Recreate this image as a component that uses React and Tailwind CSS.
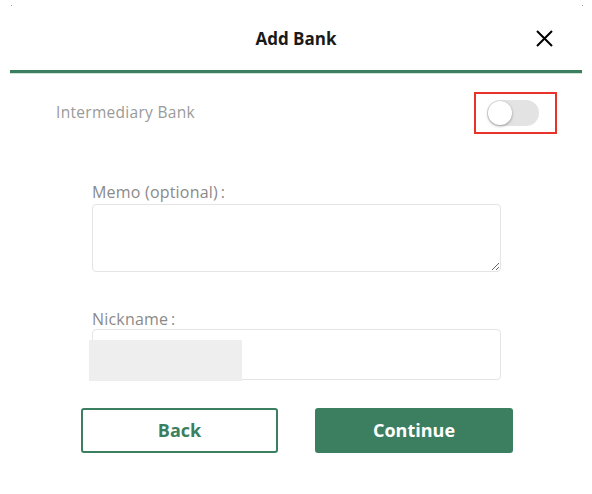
import React, { useState } from 'react';

export default function App() {
  const [intermediary, setIntermediary] = useState(false);
  const [memo, setMemo] = useState('');
  const [nickname, setNickname] = useState('');

  return (
    <div className="relative w-[592px] h-[494px] bg-white overflow-hidden font-['Open_Sans',sans-serif]">
      {/* corner marks */}
      <div className="absolute left-[11px] top-[5px] w-[1px] h-[1px] bg-gray-400" />
      <div className="absolute left-[582px] top-[5px] w-[1px] h-[1px] bg-gray-400" />

      {/* Header */}
      <div className="relative flex items-center justify-center h-[70px] pt-[8px]">
        <h1 className="text-[17px] font-bold text-[#1a1a1a]">Add Bank</h1>
        <button className="absolute right-[38px] top-[29px] text-black">
          <svg width="19" height="19" viewBox="0 0 19 19" fill="none" stroke="currentColor" strokeWidth="2">
            <path d="M2 2L17 17M17 2L2 17" />
          </svg>
        </button>
      </div>
      <div className="ml-[10px] mr-[10px] h-[4px] bg-[#3b7f60] border-b border-[#cfe3d9]" />

      {/* Intermediary toggle */}
      <div className="flex items-center justify-between pl-[56px] pr-[35px] mt-[18px]">
        <span className="text-[15.5px] text-[#9a9a9a] tracking-[0.3px]">Intermediary Bank</span>
        <div className="w-[83px] h-[42px] border-2 border-[#e8322a] flex items-center pl-[11px]">
          <button
            onClick={() => setIntermediary(!intermediary)}
            className={`relative w-[52px] h-[26px] rounded-full ${intermediary ? 'bg-[#3b7f60]' : 'bg-[#e3e3e3]'}`}
          >
            <span
              className={`absolute top-[1px] w-[24px] h-[24px] rounded-full bg-white shadow-[0_1px_3px_rgba(0,0,0,0.35)] ${intermediary ? 'left-[27px]' : 'left-[1px]'}`}
            />
          </button>
        </div>
      </div>

      {/* Form */}
      <div className="flex flex-col pl-[92px] pr-[91px] mt-[48px]">
        <label className="text-[16px] text-[#8a8a8a] font-medium leading-[21px] tracking-[0.2px]">Memo (optional)&thinsp;:</label>
        <textarea
          value={memo}
          onChange={(e) => setMemo(e.target.value)}
          className="mt-[1px] h-[68px] border border-[#e4e4e4] rounded-[4px] outline-none p-2 text-sm"
        />

        <label className="mt-[37px] text-[16px] text-[#8a8a8a] font-medium leading-[21px] tracking-[0.2px]">Nickname&thinsp;:</label>
        <div className="relative mt-[-1px]">
          <input
            value={nickname}
            onChange={(e) => setNickname(e.target.value)}
            className="w-full h-[51px] border border-[#e4e4e4] rounded-[4px] outline-none px-3 text-sm"
          />
          <div className="absolute left-[-3px] top-[11px] w-[153px] h-[41px] bg-[#eeeeee]" />
        </div>
      </div>

      {/* Buttons */}
      <div className="flex justify-between pl-[81px] pr-[79px] mt-[28px]">
        <button className="w-[197px] h-[45px] border-2 border-[#3b7f60] rounded-[3px] text-[#3b7f60] text-[18px] font-bold">
          Back
        </button>
        <button className="w-[198px] h-[45px] bg-[#3b7f60] rounded-[3px] text-white text-[18px] font-bold">
          Continue
        </button>
      </div>
    </div>
  );
}
